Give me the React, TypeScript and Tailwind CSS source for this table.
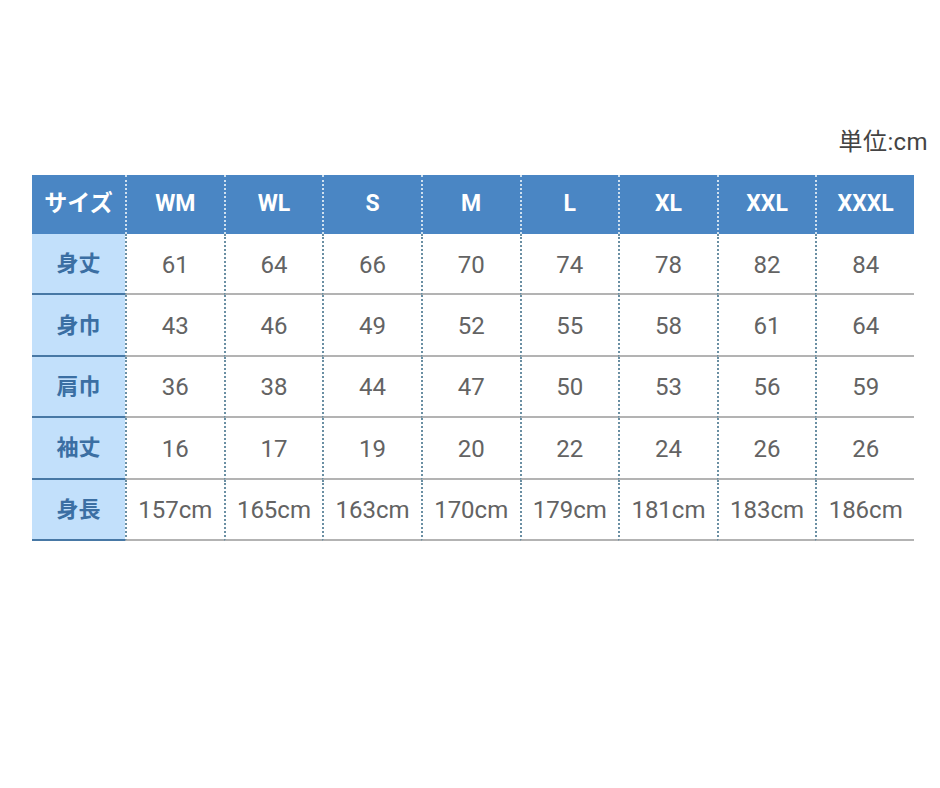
import React from 'react'

const sizes = ['WM', 'WL', 'S', 'M', 'L', 'XL', 'XXL', 'XXXL']

const rows: { label: string; values: string[] }[] = [
  { label: '身丈', values: ['61', '64', '66', '70', '74', '78', '82', '84'] },
  { label: '身巾', values: ['43', '46', '49', '52', '55', '58', '61', '64'] },
  { label: '肩巾', values: ['36', '38', '44', '47', '50', '53', '56', '59'] },
  { label: '袖丈', values: ['16', '17', '19', '20', '22', '24', '26', '26'] },
  { label: '身長', values: ['157cm', '165cm', '163cm', '170cm', '179cm', '181cm', '183cm', '186cm'] },
]

const jp = "font-['Roboto','Noto_Sans_CJK_JP',sans-serif]"

export default function App() {
  return (
    <div className={`min-h-[788px] w-[940px] bg-white ${jp}`}>
      <div className="flex justify-end pr-[12px] pt-[127px]">
        <p className="text-[24px] leading-[30px] tracking-[0.4px] text-[#444]">単位:cm</p>
      </div>

      <div className="ml-[32px] mt-[18px] w-[882px]">
        {/* header */}
        <div className="grid h-[59px] grid-cols-[93px_repeat(8,1fr)] bg-[#4a86c4] text-white">
          <div className="flex items-center justify-center text-[23px] font-bold">サイズ</div>
          {sizes.map((size) => (
            <div
              key={size}
              className="flex items-center justify-center border-l-2 border-dotted border-[#cfe0ef] text-[23px] font-bold"
            >
              {size}
            </div>
          ))}
        </div>

        {/* body */}
        {rows.map((row) => (
          <div key={row.label} className="grid h-[61.4px] grid-cols-[93px_repeat(8,1fr)]">
            <div className="flex items-center justify-center border-b-2 border-[#4778a5] bg-[#c2e0fb] text-[22px] font-bold text-[#3b6fa3]">
              {row.label}
            </div>
            {row.values.map((value, i) => (
              <div
                key={i}
                className="flex items-center justify-center border-b-2 border-l-2 border-b-[#b3b3b3] border-l-[#6a8fa3] border-dotted [border-bottom-style:solid] pt-[2px] text-[24px] text-[#636363]"
              >
                {value}
              </div>
            ))}
          </div>
        ))}
      </div>
    </div>
  )
}
